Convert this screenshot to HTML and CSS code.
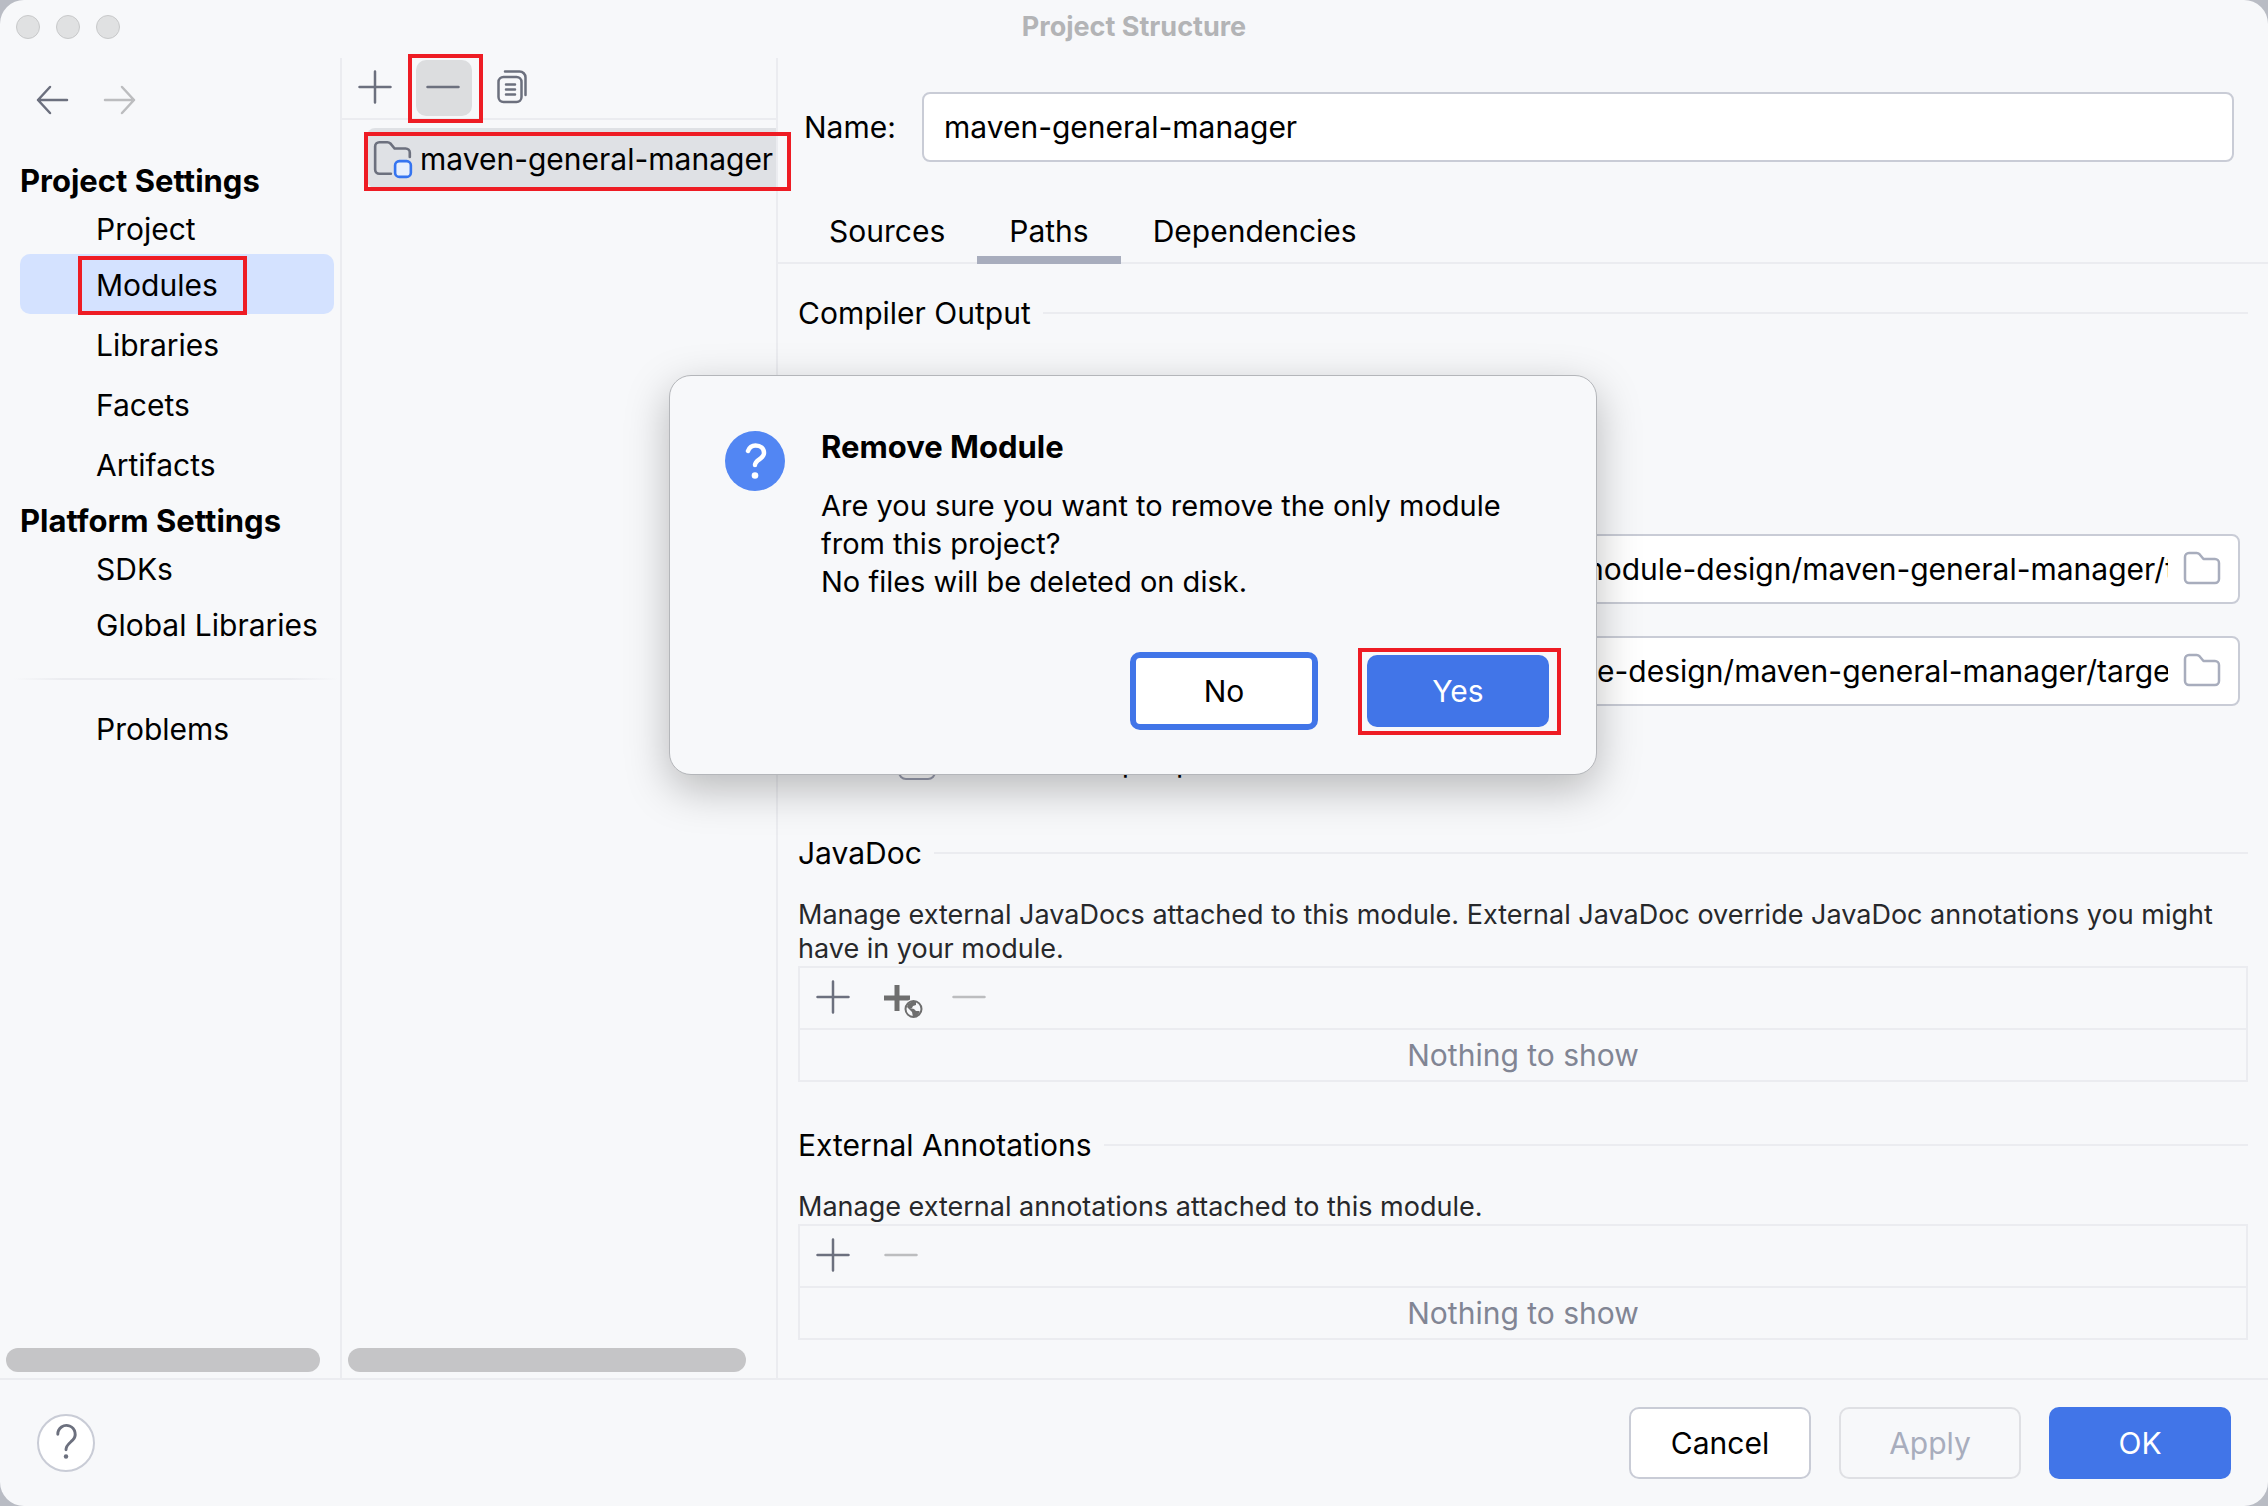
FILE: index.html
```html
<!DOCTYPE html>
<html lang="en">
<head>
<meta charset="utf-8">
<title>Project Structure</title>
<link rel="stylesheet" href="styles.css">
</head>
<body>
<svg class="sprite" aria-hidden="true">
  <symbol id="plus" viewBox="0 0 34 34" overflow="visible"><path d="M15 -.5V30.500M-.5 15H30.500"/></symbol>
  <symbol id="minus" viewBox="0 0 34 34" overflow="visible"><path d="M-.5 15H30.500"/></symbol>
  <symbol id="folder" viewBox="0 0 40 40"><path d="M3 8a4 4 0 0 1 4-4h7.500a4 4 0 0 1 3 1.200l4 4.800H33a4 4 0 0 1 4 4v16a4 4 0 0 1-4 4H7a4 4 0 0 1-4-4z"/></symbol>
</svg>

<div class="window">
  <header class="titlebar">
    <div class="lights"><i></i><i></i><i></i></div>
    <h1>Project Structure</h1>
  </header>

  <div class="body">
    <nav class="sidebar">
      <div class="history">
        <button type="button" aria-label="Back"><svg class="icon" viewBox="0 0 32 32"><path d="M31 16H2M14 3L2 16L14 29"/></svg></button>
        <button type="button" aria-label="Forward" disabled><svg class="icon" viewBox="0 0 32 32"><path d="M1 16H30M18 3L30 16L18 29"/></svg></button>
      </div>
      <h2>Project Settings</h2>
      <a href="#" class="first">Project</a>
      <a href="#" class="selected"><span class="marked">Modules</span></a>
      <a href="#">Libraries</a>
      <a href="#">Facets</a>
      <a href="#">Artifacts</a>
      <h2>Platform Settings</h2>
      <a href="#" class="first">SDKs</a>
      <a href="#">Global Libraries</a>
      <hr>
      <a href="#">Problems</a>
      <div class="scrollbar"></div>
    </nav>

    <section class="modules">
      <div class="toolbar">
        <button type="button" aria-label="Add"><svg class="icon"><use href="#plus" width="34" height="34"/></svg></button>
        <button type="button" class="pressed marked" aria-label="Remove"><svg class="icon"><use href="#minus" width="34" height="34"/></svg></button>
        <button type="button" aria-label="Copy"><svg class="icon" viewBox="0 0 32 32"><rect x="2.500" y="5" width="23" height="25" rx="5"/><path d="M9 -.5h14.500a6 6 0 0 1 6 6V23M10 12.500h9M10 17.500h9M10 22.500h9"/></svg></button>
      </div>
      <a href="#" class="module marked">
        <svg class="module-icon" viewBox="0 0 40 40"><path d="M18 34H7a4 4 0 0 1-4-4V8a4 4 0 0 1 4-4h7.500a4 4 0 0 1 3 1.200l4 4.800H32a4 4 0 0 1 4 4v4"/><rect class="badge" x="22" y="22" width="15" height="15" rx="4"/></svg>
        <span>maven-general-manager</span>
      </a>
      <div class="scrollbar"></div>
    </section>

    <main class="editor">
      <div class="name-row">
        <label for="name">Name:</label>
        <input id="name" type="text" value="maven-general-manager">
      </div>
      <div class="tabs" role="tablist">
        <button type="button" role="tab">Sources</button>
        <button type="button" role="tab" aria-selected="true">Paths</button>
        <button type="button" role="tab">Dependencies</button>
      </div>

      <section class="compiler">
        <h3>Compiler Output</h3>
        <div class="output">
          <div class="field"><input type="text" aria-label="Output path" value="/Users/demo/java/module-design/maven-general-manager/target/classes"><svg class="folder"><use href="#folder"/></svg></div>
          <div class="field"><input type="text" aria-label="Test output path" value="/Users/demo/module-design/maven-general-manager/target/test-classes"><svg class="folder"><use href="#folder"/></svg></div>
          <label class="exclude"><input type="checkbox"> Exclude output paths</label>
        </div>
      </section>

      <section class="group">
        <h3>JavaDoc</h3>
        <p>Manage external JavaDocs attached to this module. External JavaDoc override JavaDoc annotations you might have in your module.</p>
        <div class="list">
          <div class="list-tools">
            <button type="button" aria-label="Add"><svg class="icon"><use href="#plus" width="34" height="34"/></svg></button>
            <button type="button" aria-label="Add URL"><svg class="add-url" viewBox="0 0 32 32"><path d="M8.500 3h5v10.500H24v5H13.500V29h-5V18.500H-2v-5H8.500z"/><circle class="halo" cx="27.500" cy="27" r="10"/><circle class="globe" cx="27.500" cy="27" r="8"/><path d="M26 19.500l4 .5 0 3-3 1-1 2-2 0 4 1 2 2 3 0 1 1-3 4-4 1-1-5-5-5 1-3z"/></svg></button>
            <button type="button" aria-label="Remove" disabled><svg class="icon"><use href="#minus" width="34" height="34"/></svg></button>
          </div>
          <div class="empty">Nothing to show</div>
        </div>
      </section>

      <section class="group">
        <h3>External Annotations</h3>
        <p>Manage external annotations attached to this module.</p>
        <div class="list">
          <div class="list-tools">
            <button type="button" aria-label="Add"><svg class="icon"><use href="#plus" width="34" height="34"/></svg></button>
            <button type="button" aria-label="Remove" disabled><svg class="icon"><use href="#minus" width="34" height="34"/></svg></button>
          </div>
          <div class="empty">Nothing to show</div>
        </div>
      </section>
    </main>
  </div>

  <footer class="footer">
    <button type="button" class="help" aria-label="Help"><svg viewBox="0 0 56 56"><path d="M19.500 19a9 9 0 1 1 15.500 6c-3.500 3.500-7 5-7 10"/><circle cx="28" cy="42" r="2.300"/></svg></button>
    <button type="button" class="btn">Cancel</button>
    <button type="button" class="btn" disabled>Apply</button>
    <button type="button" class="btn primary">OK</button>
  </footer>

  <div class="overlay">
    <div class="dialog" role="alertdialog" aria-labelledby="dialog-title">
      <svg class="question" viewBox="0 0 60 60"><circle cx="30" cy="30" r="30"/><path d="M23 20c1.500-4 4.500-5.500 7.500-5.500 5 0 8.500 3 8.500 7.500 0 6-9 6.500-9 12"/><circle class="dot" cx="30" cy="44.500" r="3.300"/></svg>
      <div class="message">
        <h2 id="dialog-title">Remove Module</h2>
        <p>Are you sure you want to remove the only module from this project?<br>No files will be deleted on disk.</p>
      </div>
      <div class="actions">
        <button type="button" class="btn focused">No</button>
        <button type="button" class="btn primary marked">Yes</button>
      </div>
    </div>
  </div>
</div>
</body>
</html>
```

FILE: styles.css
```css
:root {
  --bg: #f7f8fa;
  --line: #ebecf0;
  --field-line: #c9ccd6;
  --icon: #6c707e;
  --blue: #4175e8;
  --red: #ee1c24;
}

* { box-sizing: border-box; }

body {
  margin: 0;
  background: #b9bcc4;
  color: #000;
  font: 30px/38px Inter, "Noto Sans", sans-serif;
}

h1, h2, h3, p { margin: 0; font-size: inherit; }
h2 { font-size: 31px; font-weight: 700; }
a { color: inherit; text-decoration: none; }
button, input { margin: 0; font: inherit; color: inherit; }
button { padding: 0; border: 0; background: none; }

.sprite { position: absolute; width: 0; height: 0; }

.window {
  position: relative;
  display: flex;
  flex-direction: column;
  min-height: 100vh;
  border-radius: 24px;
  background: var(--bg);
}

.icon {
  display: block;
  width: 32px;
  height: 32px;
  overflow: visible;
  fill: none;
  stroke: var(--icon);
  stroke-width: 2.5;
  stroke-linecap: round;
  stroke-linejoin: round;
}
:disabled > .icon { stroke: #bcbdbf; }

.marked { position: relative; }
.marked::after {
  content: "";
  position: absolute;
  inset: -8px;
  border: 4px solid var(--red);
  pointer-events: none;
}

/* Title bar */
.titlebar {
  display: grid;
  grid-template-columns: 1fr auto 1fr;
  align-items: center;
  height: 58px;
  padding: 0 16px 4px;
}
.titlebar h1 { font-size: 27px; line-height: 32px; color: #b3b4b6; }
.lights { display: flex; gap: 16px; }
.lights i {
  width: 24px;
  height: 24px;
  border: 1px solid #c8c9ca;
  border-radius: 50%;
  background: #e0e1e2;
}

.body { display: flex; flex: 1; }

/* Sidebar */
.sidebar {
  display: flex;
  flex-direction: column;
  width: 342px;
  padding-bottom: 6px;
  border-right: 2px solid var(--line);
}
.history { display: flex; gap: 36px; height: 96px; padding: 26px 36px 0; }
.history button { height: 32px; }
.sidebar h2 { padding: 8px 20px; }
.sidebar a {
  margin: 0 6px 0 20px;
  padding: 12px 0 10px 76px;
  border-radius: 10px;
  white-space: nowrap;
}
.sidebar a.first { margin-bottom: 4px; padding-top: 2px; padding-bottom: 2px; }
.sidebar .selected { background: #d4e2ff; }
.selected .marked { display: inline-block; }
.selected .marked::after { inset: -10px -29px -11px -18px; }
.sidebar hr {
  width: 324px;
  height: 2px;
  margin: 24px 0 18px 14px;
  border: 0;
  background: linear-gradient(90deg, transparent, var(--line) 15%, var(--line) 85%, transparent);
}
.scrollbar { height: 24px; margin: auto 20px 0 6px; border-radius: 12px; background: #c5c5c7; }

/* Module list */
.modules {
  display: flex;
  flex-direction: column;
  width: 436px;
  padding-bottom: 6px;
  border-right: 2px solid var(--line);
}
.toolbar {
  display: flex;
  align-items: center;
  gap: 12px;
  height: 62px;
  padding: 0 6px;
  border-bottom: 2px solid var(--line);
}
.toolbar button { display: grid; place-items: center; width: 56px; height: 56px; border-radius: 10px; }
.toolbar .pressed { background: #dcdddf; }
.toolbar .marked::after { inset: -6px -11px -7px -8px; }
.module {
  display: flex;
  align-items: center;
  gap: 6px;
  height: 60px;
  margin: 8px 0 0 25px;
  padding: 2px 0 0 5px;
  border-radius: 8px 0 0 8px;
  background: #dfe1e5;
  white-space: nowrap;
}
.module.marked::after { inset: 4px -15px -3px -3px; }
.module-icon { width: 42px; height: 42px; fill: none; stroke: var(--icon); stroke-width: 2.5; stroke-linecap: round; }
.module-icon .badge { fill: #e7effd; stroke: #3574f0; }
.modules .scrollbar { margin-right: 30px; margin-left: 6px; }

/* Editor */
.editor { flex: 1; min-width: 0; }
.name-row { display: flex; align-items: center; padding: 34px 34px 0 26px; }
.name-row label { width: 118px; }
.name-row input { flex: 1; }
.name-row input, .field {
  height: 70px;
  padding: 0 20px;
  border: 2px solid var(--field-line);
  border-radius: 8px;
  background: #fff;
}
.tabs { display: flex; height: 102px; padding: 34px 19px 0; border-bottom: 2px solid var(--line); }
.tabs button { height: 68px; padding: 2px 32px 0; }
.tabs [aria-selected] { border-bottom: 8px solid #a8adbd; padding-top: 10px; }

h3 { display: flex; align-items: center; gap: 12px; font-weight: 400; }
h3::after { content: ""; flex: 1; height: 2px; background: var(--line); }

.compiler { padding: 30px 20px 0; }
.output { display: flex; flex-direction: column; gap: 32px; padding: 202px 8px 0 100px; }
.field { display: flex; align-items: center; gap: 14px; margin-left: 394px; padding: 0 16px 0 20px; }
.field input { flex: 1; min-width: 0; padding: 0; border: 0; background: none; }
.folder { width: 40px; height: 40px; fill: none; stroke: #a8adbd; stroke-width: 2.5; stroke-linejoin: round; }
.exclude { display: flex; align-items: center; gap: 20px; height: 46px; margin-bottom: 6px; }
.exclude input {
  width: 38px;
  height: 38px;
  appearance: none;
  border: 2px solid #9a9eb0;
  border-radius: 8px;
  background: #fff;
}

.group { padding: 44px 20px 0; }
.group p { margin-top: 26px; color: #27282b; font-size: 27px; line-height: 34px; }
.list { border: 2px solid var(--line); }
.list-tools { display: flex; align-items: center; gap: 36px; height: 62px; padding: 0 18px; border-bottom: 2px solid var(--line); }
.add-url { display: block; width: 32px; height: 32px; overflow: visible; fill: #6e6e6e; }
.add-url .halo { fill: var(--bg); }
.add-url .globe { fill: var(--bg); stroke: #6e6e6e; stroke-width: 2; }
.empty { height: 50px; line-height: 50px; text-align: center; color: #818594; }

/* Footer */
.footer {
  display: flex;
  align-items: center;
  gap: 28px;
  height: 128px;
  padding: 0 37px;
  border-top: 2px solid var(--line);
}
.btn {
  width: 182px;
  height: 72px;
  border: 2px solid var(--field-line);
  border-radius: 10px;
  background: #fff;
}
.btn:disabled { border-color: #dfe0e4; background: none; color: #a8adbd; }
.btn.primary { border: 0; background: var(--blue); color: #fff; }
.btn.focused { width: 188px; height: 78px; border: 6px solid var(--blue); }
.help { width: 58px; height: 58px; margin-right: auto; border: 2px solid var(--field-line); border-radius: 50%; background: #fff; }
.help svg { display: block; fill: none; stroke: var(--icon); stroke-width: 3; stroke-linecap: round; }
.help circle { fill: var(--icon); stroke: none; }

/* Confirmation dialog */
.overlay { position: absolute; inset: 375px 2px auto 0; display: flex; justify-content: center; pointer-events: none; }
.dialog {
  display: grid;
  grid-template-columns: 60px 1fr;
  column-gap: 36px;
  width: 928px;
  padding: 52px 47px 44px 55px;
  border: 1px solid #b4b6ba;
  border-radius: 22px;
  background: var(--bg);
  box-shadow: 0 14px 44px rgba(0, 0, 0, .26);
  pointer-events: auto;
}
.question { width: 60px; height: 60px; margin-top: 3px; fill: none; stroke: #fff; stroke-width: 4.5; stroke-linecap: round; }
.question circle { fill: #5286f3; stroke: none; }
.question .dot { fill: #fff; }
.message p { margin-top: 21px; font-size: 29px; }
.actions { grid-column: 1 / -1; display: flex; align-items: center; justify-content: flex-end; gap: 49px; margin-top: 51px; }
.actions .marked::after { inset: -7px -12px -8px -9px; }
```
